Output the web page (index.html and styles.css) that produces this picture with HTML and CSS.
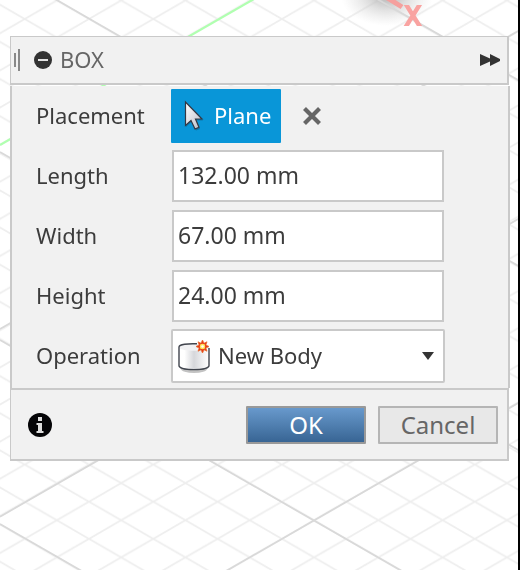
FILE: index.html
```html
<!DOCTYPE html>
<html lang="en">
<head>
<meta charset="utf-8">
<title>Box</title>
<link rel="stylesheet" href="styles.css">
</head>
<body>
<svg class="canvas" aria-hidden="true">
  <defs>
    <pattern id="grid" x="24.7" y="19" width="64.3" height="37.13" patternUnits="userSpaceOnUse">
      <path d="M-6.43 -3.713 L70.73 40.843 M-6.43 40.843 L70.73 -3.713" stroke="#eee" stroke-width="1.8" fill="none"/>
    </pattern>
    <radialGradient id="shade">
      <stop offset="0" stop-color="#b0b0b0"/>
      <stop offset=".5" stop-color="#c8c8c8" stop-opacity=".5"/>
      <stop offset="1" stop-color="#d8d8d8" stop-opacity="0"/>
    </radialGradient>
  </defs>
  <rect width="100%" height="100%" fill="url(#grid)"/>
  <ellipse cx="387" cy="-4" rx="46" ry="30" fill="url(#shade)"/>
  <g stroke="#d9d9d9" stroke-width="1.8">
    <path d="M55 -1 L640 336 M377 -1 L640 150 M0 152 L640 520 M0 340 L480 616 M0 524 L160 616"/>
    <path d="M0 329 L640 -39 M0 516.7 L640 149 M0 701 L640 333"/>
  </g>
  <path d="M0 145 L254 -1" stroke="#b0ffb0" stroke-width="2.2"/>
  <path d="M386 -3 L402 7" stroke="#f5a09e" stroke-width="5"/>
  <text class="axis" x="413" y="25" text-anchor="middle">X</text>
</svg>

<main class="panel">
  <header class="head">
    <span class="grip"></span>
    <button class="plain" type="button" aria-label="Collapse">
      <svg width="18" height="18" viewBox="0 0 18 18"><circle cx="9" cy="9" r="9" fill="#333"/><path d="M4 9h10" stroke="#e4e4e4" stroke-width="2"/></svg>
    </button>
    <h1 class="title">BOX</h1>
    <button class="plain more" type="button" aria-label="Dock">
      <svg width="20" height="12" viewBox="0 0 20 12"><path d="M0 0 L10 4.500 V0 L20 5 V7 L10 12 V7.500 L0 12Z" fill="#333"/></svg>
    </button>
  </header>

  <form class="form" id="box">
    <div class="row">
      <label for="plane">Placement</label>
      <div class="pick">
        <button class="plane" id="plane" type="button">
          <svg width="20" height="32" viewBox="0 0 20 32">
            <defs><linearGradient id="steel" x1="0" y1="0" x2="1" y2="1"><stop offset="0" stop-color="#fff"/><stop offset="1" stop-color="#b9bcc8"/></linearGradient></defs>
            <path d="M2 3 V27 L7.500 22 L12 30.500 L16 29 L12.500 20.500 H19Z" fill="#173c55" opacity=".35"/>
            <path d="M1.500 2 V25.500 L7 20.500 L11 29 L15 27.200 L11.500 19 H18Z" fill="url(#steel)" stroke="#333844" stroke-width="1.200"/>
          </svg>
          <span>Plane</span>
        </button>
        <button class="plain" type="button" aria-label="Clear selection">
          <svg width="18" height="18" viewBox="0 0 18 18"><path d="M1.500 1.500 L16.500 16.500 M16.500 1.500 L1.500 16.500" stroke="#666" stroke-width="4.200"/></svg>
        </button>
      </div>
    </div>
    <div class="row">
      <label for="length">Length</label>
      <input class="field" id="length" value="132.00 mm">
    </div>
    <div class="row">
      <label for="width">Width</label>
      <input class="field" id="width" value="67.00 mm">
    </div>
    <div class="row">
      <label for="height">Height</label>
      <input class="field" id="height" value="24.00 mm">
    </div>
    <div class="row">
      <label for="operation">Operation</label>
      <div class="choice">
        <select id="operation"><option>New Body</option></select>
        <svg class="body-icon" width="32" height="34" viewBox="0 0 32 34" aria-hidden="true">
          <defs><linearGradient id="side"><stop offset="0" stop-color="#fff"/><stop offset=".18" stop-color="#fff"/><stop offset=".5" stop-color="#d6d7db"/><stop offset=".8" stop-color="#f0f0f2"/><stop offset="1" stop-color="#fff"/></linearGradient></defs>
          <ellipse cx="16" cy="28" rx="13" ry="4" fill="#999" opacity=".6"/>
          <path d="M1 6 V24.500 C1 30 31 30 31 24.500 V6Z" fill="url(#side)"/>
          <path d="M1 6 C1 1.500 31 1.500 31 6 C31 11 1 11 1 6Z" fill="#f1f1f3"/>
          <path d="M31 7 V24.500 C31 30 1 30 1 24.500 V6 C1 3.500 10 2.300 19 2.800" fill="none" stroke="#40444d" stroke-width="1.400"/>
          <path d="M24.500 -1 L26 2.300 L29 .8 L27.800 4 L31 5.500 L27.800 7 L29 10.200 L26 8.700 L24.500 12 L23 8.700 L20 10.200 L21.200 7 L18 5.500 L21.200 4 L20 .8 L23 2.300Z" fill="#e73516" stroke="#e76a2a" stroke-width=".8"/>
          <path d="M22.500 3.500 L26.500 7.500 M26.500 3.500 L22.500 7.500" stroke="#ffb52b" stroke-width="1"/>
          <circle cx="24.500" cy="5.500" r="2.700" fill="#ffe45a"/><circle cx="24.500" cy="5.500" r="1.300" fill="#fff"/>
        </svg>
        <svg class="caret" width="12" height="8" viewBox="0 0 12 8" aria-hidden="true"><path d="M0 0H12L6 8Z" fill="#333"/></svg>
      </div>
    </div>
  </form>

  <footer class="foot">
    <button class="plain info" type="button" aria-label="Information">
      <svg width="24" height="24" viewBox="0 0 24 24"><circle cx="12" cy="12" r="12" fill="#050507"/><path d="M10 4H14V8H10Z M8.500 10H14V18H15.500V20H8.500V18H10V12H8.500Z" fill="#dedede"/></svg>
    </button>
    <button class="btn ok" type="submit" form="box">OK</button>
    <button class="btn" type="button">Cancel</button>
  </footer>
</main>
<div class="edge"></div>
</body>
</html>
```
FILE: styles.css
```css
* { box-sizing: border-box; }
body {
  margin: 0;
  min-height: 100vh;
  padding: 36px 10px;
  background: #fff;
  color: #3c3c3c;
  font: 22px/30px "Noto Sans", "Open Sans", sans-serif;
}
button, input, select { font: inherit; color: inherit; margin: 0; }
svg { display: block; flex: none; }

.canvas {
  position: fixed;
  inset: 0;
  width: 100%;
  height: 100%;
  z-index: -1;
}
.axis { font: 400 26px Roboto, sans-serif; fill: #f9a3a1; stroke: #f9a3a1; stroke-width: 2px; }
.edge {
  position: fixed;
  inset: 0 0 0 auto;
  width: 2px;
  background: #000;
}

.plain { padding: 0; border: 0; background: none; }

.head {
  display: flex;
  align-items: center;
  height: 49px;
  margin: 0 1px 1px 0;
  padding: 0 7px 0 3px;
  background: #f1f1f1;
  border: solid #c9c9c9;
  border-width: 1px 2px 2px 1px;
}
.grip {
  width: 6px;
  height: 22px;
  margin-right: 14px;
  background: linear-gradient(#888, #888) 0 50% / 2px 14px no-repeat;
  border-right: 2px solid #888;
}
.title { margin: 0 0 0 8px; padding-bottom: 2px; font-size: 22px; font-weight: 400; color: #666; }
.more { margin-left: auto; }

.form {
  padding: 0 63px 2px 24px;
  background: #f1f1f1;
  border: solid #c9c9c9;
  border-width: 0 2px;
}
.row {
  display: grid;
  grid-template-columns: 135px 1fr;
  align-items: center;
  height: 60px;
}
.row label, .plane span { padding-bottom: 2px; }
.pick { display: flex; align-items: center; gap: 22px; }
.plane {
  display: flex;
  align-items: center;
  gap: 10px;
  height: 54px;
  padding: 0 10px 0 13px;
  border: 0;
  border-radius: 1px;
  background: #0996d8;
  color: #fff;
}
.field {
  min-width: 0;
  height: 52px;
  margin: 0 1px;
  padding: 0 4px 2px;
  border: 2px solid #c9c9c9;
  border-radius: 0;
  background: #fff;
  font-size: 23px;
}
.choice { position: relative; }
.choice select {
  display: block;
  width: 100%;
  height: 54px;
  padding: 0 32px 2px 45px;
  border: 2px solid #c9c9c9;
  border-radius: 2px;
  background: #fff;
  appearance: none;
}
.body-icon { position: absolute; left: 7px; top: 12px; overflow: visible; pointer-events: none; }
.caret { position: absolute; right: 11px; top: 23px; pointer-events: none; }

.foot {
  display: flex;
  align-items: center;
  gap: 12px;
  height: 73px;
  margin-right: 1px;
  padding: 0 9px 0 17px;
  background: #f1f1f1;
  border: solid #c9c9c9;
  border-width: 2px 2px 2px 1px;
}
.info { margin-right: auto; }
.btn {
  width: 120px;
  height: 38px;
  padding: 0;
  border: 2px solid #b5b5b5;
  border-radius: 1px;
  background: #e8e8e8;
  color: #666;
  font-size: 24px;
  line-height: 34px;
}
.ok {
  border-color: #999;
  background: linear-gradient(#6899cc, #386594);
  color: #fff;
}
```
